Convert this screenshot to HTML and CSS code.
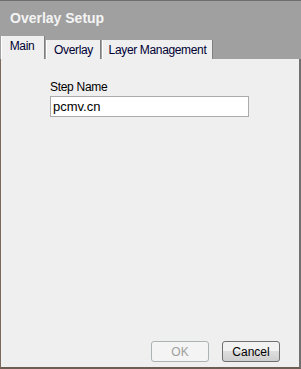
FILE: index.html
```html
<!DOCTYPE html>
<html lang="en">
<head>
    <meta charset="UTF-8">
    <title>Overlay Setup</title>
    <link rel="stylesheet" href="styles.css">
</head>
<body>
    <div class="dialog">
        <div class="dialog-header">
            <div class="dialog-title">Overlay Setup</div>
            <div class="tabs">
                <div class="tab tab-main active">Main</div>
                <div class="tab tab-overlay">Overlay</div>
                <div class="tab tab-layers">Layer Management</div>
            </div>
        </div>
        <div class="dialog-body">
            <div class="field">
                <label class="field-label">Step Name</label>
                <input class="field-input" type="text" value="pcmv.cn">
            </div>
            <div class="buttons">
                <button class="btn" disabled>OK</button>
                <button class="btn">Cancel</button>
            </div>
        </div>
    </div>
</body>
</html>
```

FILE: styles.css
```css
html, body {
    margin: 0;
    padding: 0;
    background: #efefef;
}

.dialog {
    width: 301px;
    height: 369px;
    box-sizing: border-box;
    display: flex;
    flex-direction: column;
    font-family: "Liberation Sans", Arial, sans-serif;
    font-size: 12px;
    color: #000;
    border-top: 1px solid #6e6e6e;
}

.dialog-header {
    background: #a0a0a0;
    height: 58px;
    display: flex;
    flex-direction: column;
    justify-content: space-between;
}

.dialog-title {
    color: #f4f4f4;
    font-weight: bold;
    font-size: 14px;
    padding: 9px 0 0 10px;
}

.tabs {
    display: flex;
    align-items: flex-end;
    padding-left: 1px;
    gap: 1px;
}

.tab {
    box-sizing: border-box;
    background: #efefef;
    height: 19px;
    line-height: 21px;
    text-align: center;
    border-left: 1px solid #fff;
    border-right: 1px solid #808080;
    color: #000033;
    letter-spacing: -0.35px;
}

.tab.active {
    height: 23px;
    line-height: 20px;
}

.tab-main {
    width: 44px;
    padding-right: 2px;
}

.tab-overlay {
    width: 55px;
}

.tab-layers {
    width: 111px;
}

.dialog-body {
    flex: 1;
    background: #efefef;
    border-left: 1px solid #7a6a5e;
    border-right: 2px solid #707070;
    border-bottom: 2px solid #6a5e55;
    display: flex;
    flex-direction: column;
    justify-content: space-between;
}

.field {
    display: flex;
    flex-direction: column;
    padding: 21px 0 0 49px;
    gap: 2px;
}

.field-label {
    letter-spacing: -0.3px;
}

.field-input {
    width: 199px;
    height: 21px;
    box-sizing: border-box;
    border: 1px solid #ababab;
    font-family: inherit;
    font-size: 13px;
    padding: 0 3px 0 2px;
    margin: 0;
    background: #fff;
}

.buttons {
    display: flex;
    justify-content: flex-end;
    gap: 13px;
    padding: 0 19px 5px 0;
}

.btn {
    width: 58px;
    height: 21px;
    font-family: inherit;
    font-size: 12px;
    border: 1px solid #707070;
    border-radius: 3px;
    background: linear-gradient(#f2f2f2 50%, #dddddd 50%, #cfcfcf);
    color: #000;
    padding: 0;
}

.btn:disabled {
    border-color: #adb2b5;
    background: #f4f4f4;
    color: #a0a0a0;
}
```
